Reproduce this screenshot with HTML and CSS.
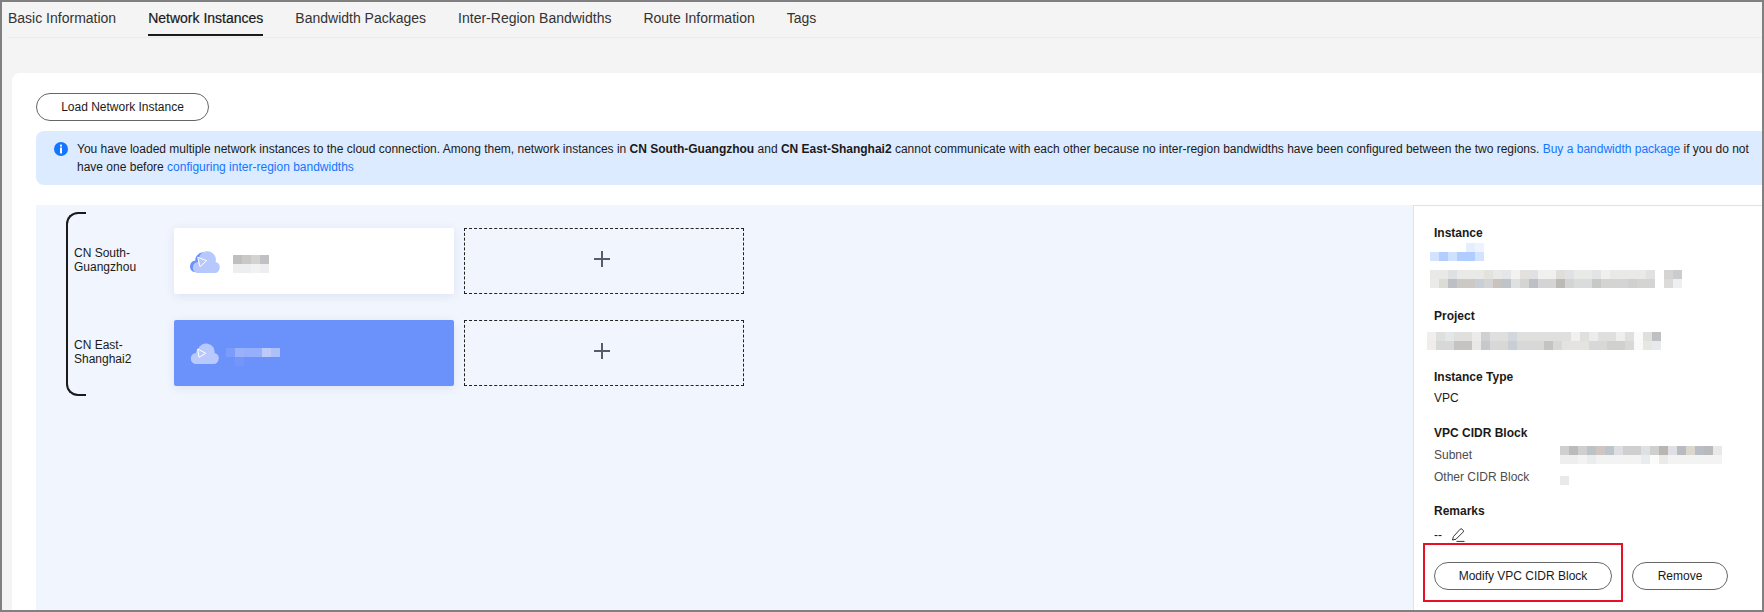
FILE: index.html
```html
<!DOCTYPE html>
<html lang="en">
<head>
<meta charset="utf-8">
<title>Network Instances</title>
<link rel="stylesheet" href="styles.css">
</head>
<body>
<div class="frame">
  <nav class="tabs">
    <a class="tab">Basic Information</a>
    <a class="tab tab-active">Network Instances</a>
    <a class="tab">Bandwidth Packages</a>
    <a class="tab">Inter-Region Bandwidths</a>
    <a class="tab">Route Information</a>
    <a class="tab">Tags</a>
  </nav>
  <main class="card">
    <button class="btn btn-load">Load Network Instance</button>
    <div class="alert">
      <svg class="alert-icon" viewBox="0 0 14 14"><circle cx="7" cy="7" r="7" fill="#1476ff"/><rect x="6" y="2.6" width="2" height="2" fill="#fff"/><rect x="6" y="5.6" width="2" height="5.8" fill="#fff"/></svg>
      <p class="alert-text">You have loaded multiple network instances to the cloud connection. Among them, network instances in <b>CN South-Guangzhou</b> and <b>CN East-Shanghai2</b> cannot communicate with each other because no inter-region bandwidths have been configured between the two regions. <a class="link">Buy a bandwidth package</a> if you do not have one before <a class="link">configuring inter-region bandwidths</a></p>
    </div>
    <section class="area">
      <div class="diagram">
        <div class="bracket"></div>
        <div class="rows">
          <div class="row">
            <div class="region">CN South-<br>Guangzhou</div>
            <div class="inst">
              <svg class="cloud cloud-first" viewBox="0 0 32 22"><path fill="#6b92fb" d="M6 21H22a6 6 0 0 0 2-11.6A8.5 8.5 0 0 0 9 4.5 5 5 0 0 0 7.5 9.4 6 6 0 0 0 6 21z"/><path fill="#b6c8fd" d="M9 22H26a5.6 5.6 0 0 0 1.6-11A8.6 8.6 0 0 0 11 6.5 5 5 0 0 0 10 11 5.6 5.6 0 0 0 9 22z"/><path fill="none" stroke="#fff" d="M9.7 6.3L18.7 9.7 12 15.7z"/></svg>
              <svg class="mosaic mosaic-first" width="36" height="18" shape-rendering="crispEdges"><rect width="9" height="9" fill="#c0bfbf"/><rect x="9" width="9" height="9" fill="#c9c8c7"/><rect x="18" width="9" height="9" fill="#d3d3d3"/><rect x="27" width="9" height="9" fill="#c1c1c4"/><rect y="9" width="9" height="9" fill="#eeeeee"/><rect x="9" y="9" width="9" height="9" fill="#eceef0"/><rect x="18" y="9" width="9" height="9" fill="#f3f2f0"/><rect x="27" y="9" width="9" height="9" fill="#eceef0"/></svg>
            </div>
            <div class="slot"><span class="plus"></span></div>
          </div>
          <div class="row">
            <div class="region">CN East-<br>Shanghai2</div>
            <div class="inst inst-on">
              <svg class="cloud cloud-second" viewBox="0 0 30 21"><path fill="#b8c9fd" d="M6 21H24a5.6 5.6 0 0 0 1.6-11A8.6 8.6 0 0 0 9 6 5 5 0 0 0 7 10 5.6 5.6 0 0 0 6 21z"/><path fill="none" stroke="#fff" d="M8.7 6L16.7 10.3 10 14.3z"/></svg>
              <svg class="mosaic mosaic-second" width="54" height="18" shape-rendering="crispEdges"><rect width="9" height="9" fill="#7c9cfb"/><rect x="9" width="9" height="9" fill="#98b1fb"/><rect x="18" width="18" height="9" fill="#96aefb"/><rect x="36" width="9" height="9" fill="#bcc9f9"/><rect x="45" width="9" height="9" fill="#acc0fb"/><rect x="9" y="9" width="9" height="9" fill="#7496fb"/></svg>
            </div>
            <div class="slot"><span class="plus"></span></div>
          </div>
        </div>
      </div>
      <aside class="panel">
        <h4 class="label">Instance</h4>
        <svg class="mosaic mosaic-name" width="54" height="18" shape-rendering="crispEdges"><rect x="36" width="9" height="9" fill="#e4eeff"/><rect x="45" width="9" height="9" fill="#eef4ff"/><rect y="9" width="9" height="9" fill="#d3e3ff"/><rect x="9" y="9" width="9" height="9" fill="#b3cdfd"/><rect x="18" y="9" width="9" height="9" fill="#d0e1fe"/><rect x="27" y="9" width="18" height="9" fill="#b1ccff"/><rect x="45" y="9" width="9" height="9" fill="#d3e3ff"/></svg>
        <svg class="mosaic mosaic-id" width="252" height="18" shape-rendering="crispEdges">
          <rect width="225" height="9" fill="#e9e9e8"/><rect x="18" width="9" height="9" fill="#dfe0e2"/><rect x="54" width="9" height="9" fill="#e4e2de"/><rect x="72" width="9" height="9" fill="#e4e6e9"/><rect x="81" width="9" height="9" fill="#f2f2f2"/><rect x="90" width="9" height="9" fill="#e3e1dd"/><rect x="99" width="9" height="9" fill="#dfe1e3"/><rect x="108" width="18" height="9" fill="#f0f0ef"/><rect x="126" width="9" height="9" fill="#e0dedb"/><rect x="135" width="9" height="9" fill="#dfe1e4"/><rect x="162" width="9" height="9" fill="#e2e4e6"/><rect x="171" width="9" height="9" fill="#f0f0ee"/><rect x="216" width="9" height="9" fill="#dfe1e3"/>
          <rect x="9" y="9" width="216" height="9" fill="#d4d4d4"/><rect y="9" width="9" height="9" fill="#eaeaea"/><rect x="9" y="9" width="9" height="9" fill="#dcdbd6"/><rect x="18" y="9" width="9" height="9" fill="#bcc0c6"/><rect x="27" y="9" width="18" height="9" fill="#ccc8c4"/><rect x="45" y="9" width="9" height="9" fill="#c8ced6"/><rect x="63" y="9" width="9" height="9" fill="#c9c3bd"/><rect x="72" y="9" width="9" height="9" fill="#bfc4ca"/><rect x="81" y="9" width="9" height="9" fill="#e0e0e0"/><rect x="99" y="9" width="9" height="9" fill="#bcbfc4"/><rect x="126" y="9" width="9" height="9" fill="#bcbab7"/><rect x="144" y="9" width="18" height="9" fill="#dadcdb"/><rect x="162" y="9" width="9" height="9" fill="#c8c8c6"/><rect x="198" y="9" width="9" height="9" fill="#cfd0d0"/>
          <rect x="234" width="9" height="9" fill="#d6d4d3"/><rect x="243" width="9" height="9" fill="#cbcccf"/><rect x="234" y="9" width="9" height="9" fill="#dcdbda"/><rect x="243" y="9" width="9" height="9" fill="#eeefef"/>
        </svg>
        <h4 class="label label-project">Project</h4>
        <svg class="mosaic mosaic-project" width="234" height="18" shape-rendering="crispEdges">
          <rect width="234" height="9" fill="#dfdfde"/><rect width="9" height="9" fill="#f1efee"/><rect x="18" width="9" height="9" fill="#e4e7ea"/><rect x="45" width="9" height="9" fill="#ecebe9"/><rect x="54" width="9" height="9" fill="#cfd0d3"/><rect x="81" width="9" height="9" fill="#d2d6dd"/><rect x="144" width="9" height="9" fill="#f1f0ee"/><rect x="162" width="9" height="9" fill="#ececee"/><rect x="189" width="9" height="9" fill="#eeeeec"/><rect x="207" width="9" height="9" fill="#fafafa"/><rect x="225" width="9" height="9" fill="#bfc0c4"/>
          <rect y="9" width="234" height="9" fill="#d8d8d8"/><rect y="9" width="9" height="9" fill="#efeceb"/><rect x="27" y="9" width="18" height="9" fill="#c6c4c3"/><rect x="45" y="9" width="9" height="9" fill="#e8e8e6"/><rect x="54" y="9" width="9" height="9" fill="#c6c8cb"/><rect x="81" y="9" width="9" height="9" fill="#c8ced4"/><rect x="117" y="9" width="9" height="9" fill="#c4c4c3"/><rect x="135" y="9" width="27" height="9" fill="#e4e3e0"/><rect x="180" y="9" width="18" height="9" fill="#d0d0cf"/><rect x="207" y="9" width="9" height="9" fill="#f8f9f9"/><rect x="216" y="9" width="9" height="9" fill="#e8e6e3"/><rect x="225" y="9" width="9" height="9" fill="#e8e9ec"/>
        </svg>
        <h4 class="label label-type">Instance Type</h4>
        <p class="value">VPC</p>
        <h4 class="label label-cidr">VPC CIDR Block</h4>
        <div class="kv">
          <span class="key">Subnet</span>
          <svg class="mosaic" width="162" height="18" shape-rendering="crispEdges">
            <rect width="162" height="9" fill="#cfcfcf"/><rect x="9" width="9" height="9" fill="#bdbaba"/><rect x="27" width="9" height="9" fill="#bdc2c6"/><rect x="36" width="9" height="9" fill="#cfc5c3"/><rect x="45" width="9" height="9" fill="#bcc5ca"/><rect x="54" width="9" height="9" fill="#dcdee1"/><rect x="81" width="9" height="9" fill="#dfe0e3"/><rect x="99" width="9" height="9" fill="#b8b5b3"/><rect x="108" width="9" height="9" fill="#dee0e5"/><rect x="117" width="9" height="9" fill="#b9bbc0"/><rect x="126" width="9" height="9" fill="#dad7cf"/><rect x="135" width="9" height="9" fill="#b9bdc4"/><rect x="144" width="9" height="9" fill="#b8babc"/><rect x="153" width="9" height="9" fill="#e8e8e8"/>
            <rect y="9" width="162" height="9" fill="#f3f3f3"/><rect y="9" width="18" height="9" fill="#eeeeee"/><rect x="27" y="9" width="9" height="9" fill="#ebecec"/><rect x="81" y="9" width="9" height="9" fill="#e9ebee"/><rect x="90" y="9" width="9" height="9" fill="#fbfbf9"/><rect x="99" y="9" width="9" height="9" fill="#eaeaea"/>
          </svg>
        </div>
        <div class="kv kv-other">
          <span class="key">Other CIDR Block</span>
          <svg class="mosaic mosaic-tiny" width="9" height="9" shape-rendering="crispEdges"><rect width="9" height="9" fill="#e8e9eb"/></svg>
        </div>
        <h4 class="label label-remarks">Remarks</h4>
        <p class="value remarks">-- <svg class="pencil" viewBox="0 0 14 14" fill="none" stroke="#333" stroke-width="1"><path d="M2.4 8.6L9.2 1.2a1.3 1.3 0 0 1 1.9 0l1 1a1.3 1.3 0 0 1 0 1.9L5 11.2 1.5 12z"/><path d="M5.5 13.4H13.5"/></svg></p>
        <div class="actions">
          <button class="btn btn-modify">Modify VPC CIDR Block</button>
          <button class="btn btn-remove">Remove</button>
        </div>
      </aside>
    </section>
  </main>
  <div class="callout"></div>
</div>
</body>
</html>
```

FILE: styles.css
```css
* { box-sizing: border-box; }
html, body { margin: 0; padding: 0; }
body { width: 1764px; height: 612px; overflow: hidden; font-family: "Liberation Sans", Arial, sans-serif; color: #1a1a1a; }
h4, p { margin: 0; }

.frame { position: relative; width: 1764px; height: 612px; border: 2px solid #808080; background: #f4f4f4; display: flex; flex-direction: column; overflow: hidden; }

.tabs { display: flex; gap: 32px; height: 36px; margin-left: 5px; padding-left: 1px; border-bottom: 1px solid #ebebeb; flex: none; }
.tab { height: 34px; line-height: 32px; font-size: 14px; color: #333; white-space: nowrap; }
.tab-active { color: #1a1a1a; border-bottom: 2px solid #1a1a1a; -webkit-text-stroke: 0.2px #1a1a1a; }

.card { flex: 1; min-height: 0; margin: 35px 0 0 10px; padding: 20px 0 0 24px; background: #fff; border-top-left-radius: 8px; display: flex; flex-direction: column; }

.btn { height: 28px; border: 1px solid #666; border-radius: 14px; background: #fff; font: 12px "Liberation Sans", Arial, sans-serif; color: #1a1a1a; padding: 0; }
.btn-load { width: 173px; flex: none; }

.alert { margin-top: 10px; height: 54px; flex: none; background: #dcebff; border-radius: 8px 0 0 8px; display: flex; padding: 9px 12px 0 18px; }
.alert-icon { width: 14px; height: 14px; flex: none; margin: 2px 9px 0 0; }
.alert-text { font-size: 12px; line-height: 18px; color: #1a1a1a; }
.link { color: #1476ff; }

.area { margin-top: 20px; flex: 1; min-height: 0; display: flex; }

.diagram { flex: 1; background: #f1f5fd; display: flex; padding: 7px 0 0 30px; }
.bracket { width: 20px; height: 184px; border: 2px solid #1a1a1a; border-right: 0; border-radius: 12px 0 0 12px; flex: none; }
.rows { margin-left: -12px; padding-top: 16px; display: flex; flex-direction: column; gap: 26px; }
.row { display: flex; height: 66px; }
.region { width: 100px; font-size: 12px; line-height: 14px; padding-top: 18px; flex: none; }
.inst { width: 280px; height: 66px; background: #fff; border-radius: 2px; box-shadow: 0 2px 10px rgba(100, 120, 190, 0.14); display: flex; align-items: flex-start; flex: none; }
.inst-on { background: #6b92fb; }
.cloud { flex: none; display: block; }
.cloud-first { width: 32px; height: 22px; margin: 23px 0 0 14px; }
.cloud-second { width: 30px; height: 21px; margin: 23px 0 0 15px; }
.mosaic { display: block; flex: none; }
.mosaic-first { margin: 27px 0 0 13px; }
.mosaic-second { margin: 28px 0 0 7px; }
.slot { width: 280px; height: 66px; margin-left: 10px; border: 1px dashed #222; display: flex; align-items: center; justify-content: center; flex: none; padding: 0 4px 4px 0; }
.plus { position: relative; display: block; width: 16px; height: 16px; }
.plus::before, .plus::after { content: ""; position: absolute; background: #575b6b; }
.plus::before { left: 0; right: 0; top: 7px; height: 2px; }
.plus::after { top: 0; bottom: 0; left: 7px; width: 2px; }

.panel { width: 349px; flex: none; background: #fff; border-top: 1px solid #e2e2e2; border-left: 1px solid #e2e2e2; padding: 18px 0 0 20px; }
.label { font-size: 12px; line-height: 18px; font-weight: bold; color: #1a1a1a; }
.value { font-size: 12px; line-height: 18px; color: #1a1a1a; }
.mosaic-name { margin: 1px 0 0 -4px; }
.mosaic-id { margin: 9px 0 0 -4px; }
.label-project { margin-top: 19px; }
.mosaic-project { margin: 7px 0 0 -7px; }
.label-type { margin-top: 18px; }
.label-type + .value { margin-top: 3px; }
.label-cidr { margin-top: 17px; }
.kv { display: flex; margin-top: 4px; height: 18px; }
.kv-other { margin-top: 4px; }
.key { width: 126px; font-size: 12px; line-height: 18px; color: #4d4d4d; flex: none; }
.mosaic-tiny { margin-top: 8px; }
.label-remarks { margin-top: 16px; }
.remarks { margin-top: 6px; display: flex; align-items: center; gap: 9px; }
.pencil { width: 14px; height: 14px; display: block; }
.actions { display: flex; gap: 20px; margin-top: 18px; }
.btn-modify { width: 178px; }
.btn-remove { width: 96px; }

.callout { position: absolute; left: 1421px; top: 541px; width: 200px; height: 59px; border: 2px solid #e81123; pointer-events: none; }
```
